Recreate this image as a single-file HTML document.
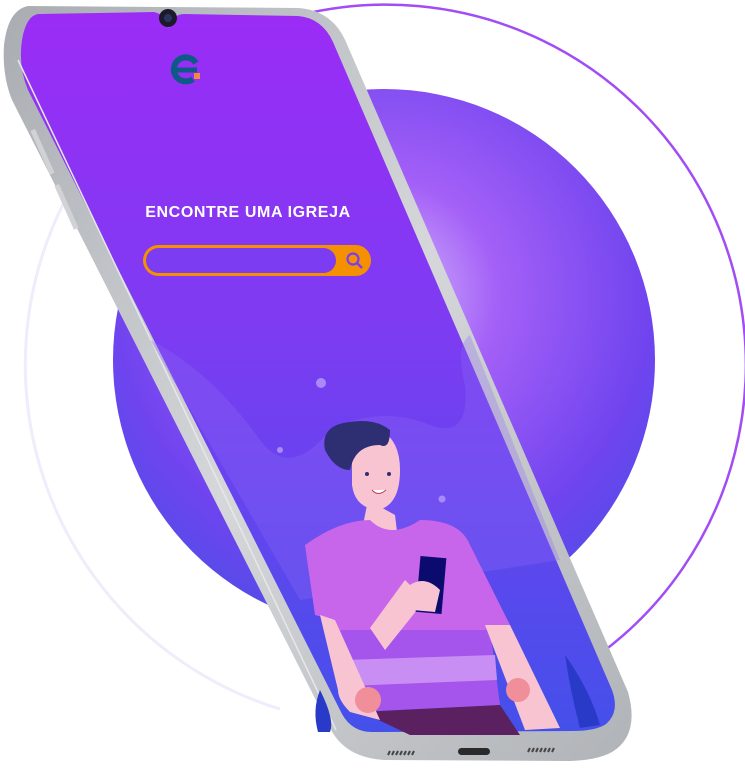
<!DOCTYPE html>
<html><head><meta charset="utf-8"><style>
html,body{margin:0;padding:0;background:#fff;width:745px;height:781px;overflow:hidden}
svg{display:block}
</style></head><body>
<svg width="745" height="781" viewBox="0 0 745 781" xmlns="http://www.w3.org/2000/svg">
<defs>
<radialGradient id="sph" cx="0.5" cy="0.38" r="0.7">
<stop offset="0" stop-color="#d6bdfc"/><stop offset="0.3" stop-color="#a460f7"/><stop offset="0.7" stop-color="#7044ef"/><stop offset="1" stop-color="#4650e6"/>
</radialGradient>
<linearGradient id="scr" x1="0" y1="0" x2="0" y2="1">
<stop offset="0" stop-color="#9b2cf6"/><stop offset="0.45" stop-color="#7c3cf2"/><stop offset="1" stop-color="#4450ea"/>
</linearGradient>
<linearGradient id="body" x1="0" y1="0" x2="1" y2="1">
<stop offset="0" stop-color="#a9adb2"/><stop offset="0.5" stop-color="#d5d7da"/><stop offset="1" stop-color="#b0b3b7"/>
</linearGradient>
</defs>
<path d="M300 15 A360 360 0 0 1 600 654" fill="none" stroke="#a24cf5" stroke-width="2.5"/>
<path d="M300 15 A360 360 0 0 0 280 709" fill="none" stroke="#efecfb" stroke-width="3"/>
<circle cx="384" cy="360" r="271" fill="url(#sph)"/>
<!-- phone body -->
<path d="M28 6 L298 8 Q332 10 346 42 L628 692 Q640 735 612 752 Q598 760 570 761 L385 760 Q345 758 330 728 L12 100 Q2 75 4 45 Q8 10 28 6 Z" fill="url(#body)"/>
<!-- screen -->
<path d="M38 14 L154 12 Q165 14 169 28 Q173 14 184 14 L298 16 Q322 18 333 42 L612 690 Q620 712 606 724 Q596 731 572 731 L372 732 Q352 732 342 714 L28 90 Q18 66 22 40 Q26 16 38 14 Z" fill="url(#scr)"/>
<path d="M18 60 L336 730" stroke="#e6e7e9" stroke-width="1.5"/>
<!-- side buttons -->
<rect x="40" y="128" width="5" height="48" fill="#d0d2d5" transform="rotate(-24 42 152)"/>
<rect x="64" y="183" width="5" height="48" fill="#d0d2d5" transform="rotate(-24 66 207)"/>
<!-- camera -->
<circle cx="168" cy="18" r="9" fill="#1a1a2a"/><circle cx="168" cy="18" r="4" fill="#2b3360"/>
<!-- logo -->
<path d="M196 63 A12 12 0 1 0 193 79" fill="none" stroke="#0e5a86" stroke-width="6"/>
<path d="M173 70 L197 70" stroke="#0e5a86" stroke-width="5"/>
<rect x="194" y="73" width="6" height="6" fill="#f08a3c"/>
<text x="248" y="217" fill="#fff" font-family="Liberation Sans, sans-serif" font-size="16" font-weight="bold" letter-spacing="0.6" text-anchor="middle">ENCONTRE UMA IGREJA</text>
<!-- search -->
<rect x="143" y="245" width="228" height="31" rx="15.5" fill="#f59100"/>
<rect x="146" y="248" width="190" height="25" rx="12.5" fill="#7c3cf2"/>
<circle cx="353" cy="259" r="5.5" fill="none" stroke="#7c3cf2" stroke-width="2.2"/>
<path d="M357 263 L362 268" stroke="#7c3cf2" stroke-width="2.5"/>
<!-- wavy bg shape -->
<path d="M150 340 Q210 370 260 440 Q290 480 330 430 Q380 405 430 425 Q470 440 465 385 Q455 345 470 335 L560 560 L300 600 Z" fill="#8d6af6" opacity="0.3"/>
<circle cx="321" cy="383" r="5" fill="#a98af8"/><circle cx="442" cy="499" r="3.5" fill="#a98af8"/><circle cx="280" cy="450" r="3" fill="#a98af8"/>
<!-- person -->
<path d="M368 500 L395 515 L398 540 L360 540 Z" fill="#f9c4d2"/>
<path d="M305 545 Q340 520 370 520 Q390 540 420 520 Q460 520 470 545 L510 625 L485 630 L500 705 L350 712 L335 620 L315 615 Z" fill="#c766ea"/>
<path d="M340 630 L355 712 L500 705 L490 630 Z" fill="#a655ec"/>
<path d="M345 660 L495 655 L497 680 L348 686 Z" fill="#c98ef3"/>
<path d="M362 712 L410 735 L520 735 L500 705 Z" fill="#5a2060"/>
<path d="M320 615 L335 620 L380 720 L350 712 Q338 700 338 690 Z" fill="#f9c4d2"/>
<path d="M485 625 L510 625 L560 728 L525 730 Z" fill="#f9c4d2"/>
<circle cx="368" cy="700" r="13" fill="#f08e9a"/><circle cx="518" cy="690" r="12" fill="#f08e9a"/>
<path d="M370 628 L405 580 L425 600 L385 650 Z" fill="#f9c4d2"/>
<rect x="418" y="557" width="26" height="56" fill="#0b0b6e" transform="rotate(5 431 585)"/>
<path d="M410 585 Q425 575 440 590 L435 612 L412 610 Z" fill="#f9c4d2"/>
<path d="M352 455 Q352 430 380 430 Q400 440 400 470 Q400 505 378 510 Q355 508 352 485 Z" fill="#f9c4d2"/>
<path d="M325 450 Q320 425 350 422 Q375 418 390 430 Q390 450 380 445 Q355 445 350 470 Q335 470 325 450 Z" fill="#2e2e72"/>
<circle cx="367" cy="474" r="2" fill="#2e2e72"/><circle cx="389" cy="474" r="2" fill="#2e2e72"/>
<path d="M372 490 Q378 497 386 490" fill="#fff" stroke="#c04060" stroke-width="1"/>
<path d="M320 690 Q335 720 330 732 L318 732 Q312 710 320 690Z" fill="#2a3ac8"/>
<path d="M565 655 Q590 690 600 725 L580 728 Q570 690 565 655Z" fill="#2a3ac8"/>
<!-- bottom speaker/port -->
<rect x="458" y="748" width="32" height="7" rx="3.5" fill="#2a2a2a"/>
<g stroke="#444" stroke-width="2"><path d="M388 755 L390 751 M392 755 L394 751 M396 755 L398 751 M400 755 L402 751 M404 755 L406 751 M408 755 L410 751 M412 755 L414 751 M528 752 L530 748 M532 752 L534 748 M536 752 L538 748 M540 752 L542 748 M544 752 L546 748 M548 752 L550 748 M552 752 L554 748"/></g>
</svg>
</body></html>
